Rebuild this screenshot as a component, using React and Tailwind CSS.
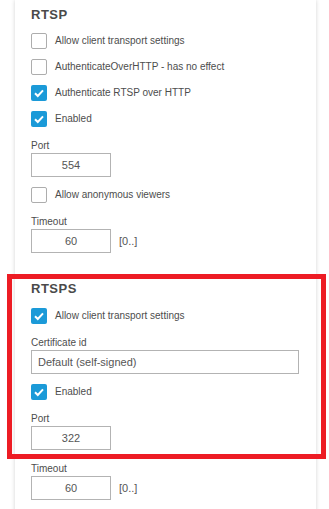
import React from 'react';

const font = { fontFamily: '"Liberation Sans", Arial, sans-serif' };

const Check = ({ checked, label }) => (
  <label className="flex items-center h-4">
    {checked ? (
      <span className="w-4 h-4 rounded-[2px] bg-[#1b9ad8] flex items-center justify-center">
        <svg width="12" height="12" viewBox="0 0 12 12">
          <path d="M2 6.2 L4.8 9 L10 3.4" fill="none" stroke="#fff" strokeWidth="2" />
        </svg>
      </span>
    ) : (
      <span className="w-4 h-4 rounded-[2px] border border-[#adadad] bg-white" />
    )}
    <span className="ml-2 text-[10px] leading-[14px] text-[#4d4d4d]">{label}</span>
  </label>
);

const Field = ({ label, value, wide, hint }) => (
  <div className="mt-3">
    <div className="text-[10px] leading-[14px] text-[#4d4d4d]">{label}</div>
    <div className="flex items-center">
      {wide ? (
        <div className="w-[268px] h-6 border border-[#b3b3b3] text-[11px] text-[#555] flex items-center pl-[6px]">{value}</div>
      ) : (
        <div className="w-20 h-6 border border-[#b3b3b3] text-[11px] text-[#555] flex items-center justify-center">{value}</div>
      )}
      {hint && <span className="ml-2 text-[11px] text-[#555]">{hint}</span>}
    </div>
  </div>
);

const Title = ({ children, top }) => (
  <div className={`${top} text-[13px] leading-4 font-bold text-[#4a4a4a] tracking-[0.5px]`}>{children}</div>
);

const App = () => {
  return (
    <div className="relative w-[329px] h-[509px] overflow-hidden bg-white" style={font}>
      <div className="ml-[15px] w-[301px] min-h-[520px] bg-white shadow-[0_0_4px_rgba(0,0,0,0.18)] pl-4">
        <Title top="pt-[7px]">RTSP</Title>
        <div className="mt-[10px] flex flex-col gap-[10px]">
          <Check label="Allow client transport settings" />
          <Check label="AuthenticateOverHTTP - has no effect" />
          <Check checked label="Authenticate RTSP over HTTP" />
          <Check checked label="Enabled" />
        </div>
        <Field label="Port" value="554" />
        <div className="mt-[10px]">
          <Check label="Allow anonymous viewers" />
        </div>
        <Field label="Timeout" value="60" hint="[0..]" />

        <Title top="mt-7">RTSPS</Title>
        <div className="mt-[11px]">
          <Check checked label="Allow client transport settings" />
        </div>
        <Field label="Certificate id" value="Default (self-signed)" wide />
        <div className="mt-[10px]">
          <Check checked label="Enabled" />
        </div>
        <Field label="Port" value="322" />
        <Field label="Timeout" value="60" hint="[0..]" />
      </div>

      {/* red highlight annotation over the RTSPS block */}
      <div className="absolute left-[7px] top-[274px] w-[319px] h-[185px] border-[5px] border-[#ed1c24]" />
    </div>
  );
};

export default App;
